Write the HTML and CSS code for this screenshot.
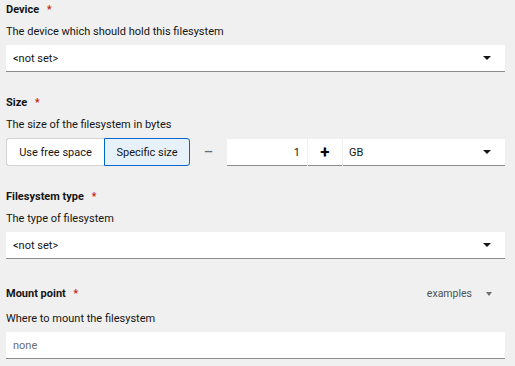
FILE: index.html
```html
<!DOCTYPE html>
<html lang="en">
<head>
  <meta charset="UTF-8" />
  <title>Create filesystem</title>
  <link rel="stylesheet" href="styles.css">
</head>
<body>
  <form class="form">
    <div class="group">
      <div class="label">Device <span class="req">*</span></div>
      <div class="helper">The device which should hold this filesystem</div>
      <div class="select">
        <span>&lt;not set&gt;</span>
        <span class="caret"></span>
      </div>
    </div>

    <div class="group">
      <div class="label">Size <span class="req">*</span></div>
      <div class="helper">The size of the filesystem in bytes</div>
      <div class="size-row">
        <div class="toggle">
          <button type="button" class="toggle-btn">Use free space</button>
          <button type="button" class="toggle-btn selected">Specific size</button>
        </div>
        <button type="button" class="step minus">&minus;</button>
        <div class="number">1</div>
        <button type="button" class="step plus">+</button>
        <div class="select unit">
          <span>GB</span>
          <span class="caret"></span>
        </div>
      </div>
    </div>

    <div class="group">
      <div class="label">Filesystem type <span class="req">*</span></div>
      <div class="helper">The type of filesystem</div>
      <div class="select">
        <span>&lt;not set&gt;</span>
        <span class="caret"></span>
      </div>
    </div>

    <div class="group">
      <div class="label label-row">
        <span>Mount point <span class="req">*</span></span>
        <span class="examples">examples <span class="caret small"></span></span>
      </div>
      <div class="helper tight">Where to mount the filesystem</div>
      <div class="text-input placeholder">none</div>
    </div>
  </form>
</body>
</html>
```

FILE: styles.css
```css
:root {
  --text: #151515;
  --muted: #6a6e73;
  --line: #8a8d90;
  --blue: #0066cc;
  --danger: #c9190b;
}

body {
  margin: 0;
  background: #f0f0f0;
  font-family: 'Roboto', sans-serif;
  font-size: 11px;
  color: var(--text);
}

.form {
  display: flex;
  flex-direction: column;
  gap: 21px;
  padding: 0 10px 0 6px;
}

.group {
  display: flex;
  flex-direction: column;
}

.label {
  font-weight: bold;
  height: 20px;
  line-height: 20px;
}

.req {
  color: var(--danger);
  margin-left: 5px;
  font-size: 10px;
  line-height: 1;
}

.label-row {
  display: flex;
  justify-content: space-between;
  align-items: center;
  height: 28px;
}

.examples {
  font-weight: normal;
  font-size: 10.5px;
  color: #4f5255;
  padding-right: 13px;
  display: flex;
  align-items: center;
  gap: 14px;
}

.helper {
  margin-top: 3px;
  height: 18px;
  line-height: 18px;
  margin-bottom: 4px;
}

.helper.tight {
  margin-top: 2px;
}

.select,
.text-input,
.number,
.step {
  background: #fff;
  border-bottom: 1px solid var(--line);
  height: 26px;
  box-sizing: content-box;
}

.select {
  display: flex;
  align-items: center;
  justify-content: space-between;
  padding: 0 14px 0 7px;
}

.caret {
  width: 0;
  height: 0;
  border-left: 4px solid transparent;
  border-right: 4px solid transparent;
  border-top: 4px solid var(--text);
}

.caret.small {
  border-top-color: var(--muted);
  border-left-width: 3.5px;
  border-right-width: 3.5px;
}

.text-input {
  display: flex;
  align-items: center;
  padding: 0 7px;
}

.placeholder {
  color: var(--muted);
}

.size-row {
  display: flex;
  align-items: flex-end;
  height: 28px;
}

.toggle {
  display: flex;
  height: 28px;
}

.toggle-btn {
  font: inherit;
  color: var(--text);
  background: #fff;
  border: 1px solid #d2d2d2;
  padding: 0;
  margin: 0;
  white-space: nowrap;
  cursor: pointer;
}

.toggle-btn:first-child {
  border-radius: 3px 0 0 3px;
  border-right: none;
  width: 98px;
}

.toggle-btn.selected {
  background: #e7f1fa;
  border-color: var(--blue);
  border-radius: 0 3px 3px 0;
  width: 86px;
}

.step {
  font: inherit;
  font-size: 18px;
  line-height: 1;
  border: none;
  border-bottom: 1px solid var(--line);
  padding: 0;
  margin: 0;
  width: 34px;
}

.step.minus {
  background: transparent;
  border-bottom-color: transparent;
  color: var(--muted);
  width: 37px;
}

.step.plus {
  font-size: 17px;
  font-weight: bold;
  margin-left: 1px;
}

.number {
  width: 73px;
  padding-right: 7px;
  display: flex;
  align-items: center;
  justify-content: flex-end;
}

.select.unit {
  flex: 1;
  margin-left: 1px;
  padding-left: 6px;
}
```
